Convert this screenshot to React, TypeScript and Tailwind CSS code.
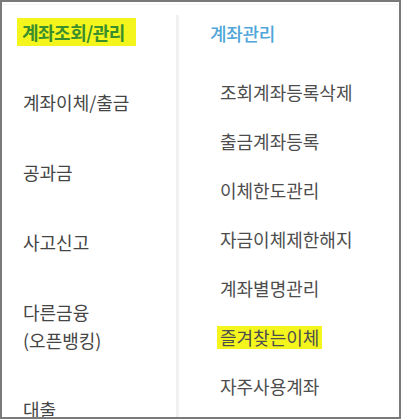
import React from "react";

const leftItems: string[][] = [
  ["계좌이체/출금"],
  ["공과금"],
  ["사고신고"],
  ["다른금융", "(오픈뱅킹)"],
];

const rightItems = [
  "조회계좌등록삭제",
  "출금계좌등록",
  "이체한도관리",
  "자금이체제한해지",
  "계좌별명관리",
];

export default function App() {
  return (
    <div
      className="w-[401px] h-[419px] overflow-hidden bg-white border-2 border-[#7a7a7a] flex flex-col"
      style={{ fontFamily: '"Noto Sans CJK KR", "Noto Sans", sans-serif' }}
    >
      <div className="h-[3px] border-b border-[#f4f4f4]" />
      <div className="flex flex-1 min-h-0">
        {/* Left column */}
        <div className="w-[174px] shrink-0 pl-[20px] pt-[13px] flex flex-col gap-[42px] text-[18px] leading-[28px] text-[#454545]">
          <div>
            <span className="inline-block bg-[#f5f51e] pl-[5px] pr-[11px] -ml-[5px] leading-[28px] font-bold text-[#3a8f2c] tracking-[-0.5px]">
              계좌조회/관리
            </span>
          </div>
          {leftItems.map((lines, i) => (
            <div key={i} className="pl-[1px]">
              {lines.map((l) => (
                <div key={l}>{l}</div>
              ))}
            </div>
          ))}
          <div className="pl-[1px] -mt-[1px]">대출</div>
        </div>
        {/* Divider */}
        <div className="w-[3px] shrink-0 mt-[10px] bg-[#f1f1f1]" />
        {/* Right column */}
        <div className="flex-1 pl-[31px] pt-[14px] text-[18px] leading-[28px]">
          <div className="text-[#4fa6d8] font-medium tracking-[-0.3px]">계좌관리</div>
          <div className="mt-[31px] pl-[10px] flex flex-col gap-[21px] text-[#4d4d4d]">
            {rightItems.map((t) => (
              <div key={t}>{t}</div>
            ))}
            <div>
              <span className="inline-block bg-[#f5f51e] px-[3px] -ml-[3px] leading-[23px]">
                즐겨찾는이체
              </span>
            </div>
            <div>자주사용계좌</div>
          </div>
        </div>
      </div>
    </div>
  );
}
